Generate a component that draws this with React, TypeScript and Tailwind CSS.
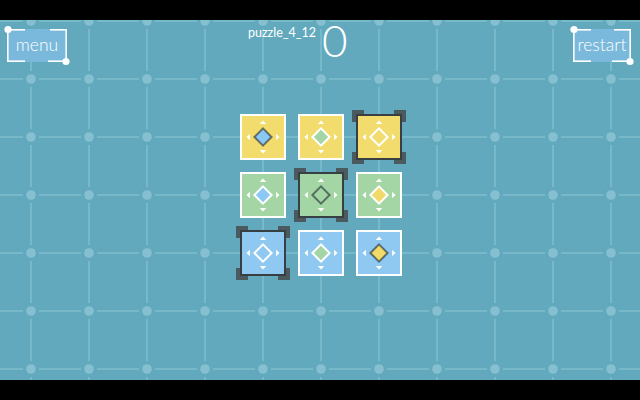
import React from "react";

type Hue = "yellow" | "green" | "blue";

const tileBg: Record<Hue, string> = {
  yellow: "bg-[#f2dc6e]",
  green: "bg-[#a4d6a5]",
  blue: "bg-[#8fc9f1]",
};

const gemFill: Record<Hue, string> = {
  yellow: "#f2da6a",
  green: "#a4d6a5",
  blue: "#8cc8f4",
};

type Tile = { bg: Hue; gem: Hue | null; dark: boolean; selected?: boolean };

const tiles: Tile[] = [
  { bg: "yellow", gem: "blue", dark: true },
  { bg: "yellow", gem: "green", dark: false },
  { bg: "yellow", gem: null, dark: false, selected: true },
  { bg: "green", gem: "blue", dark: false },
  { bg: "green", gem: null, dark: true, selected: true },
  { bg: "green", gem: "yellow", dark: false },
  { bg: "blue", gem: null, dark: false, selected: true },
  { bg: "blue", gem: "green", dark: false },
  { bg: "blue", gem: "yellow", dark: true },
];

const xs = Array.from({ length: 11 }, (_, i) => 31 + i * 58);
const ys = Array.from({ length: 7 }, (_, i) => 1 + i * 58);

function GridBackground() {
  return (
    <svg className="absolute inset-0" width={640} height={360}>
      {xs.map((x) => (
        <line key={"v" + x} x1={x} y1={0} x2={x} y2={360} stroke="#80bfcd" strokeWidth={1.5} />
      ))}
      {ys.map((y) => (
        <line key={"h" + y} x1={0} y1={y} x2={640} y2={y} stroke="#80bfcd" strokeWidth={1.5} />
      ))}
      {ys.map((y) =>
        xs.map((x) => (
          <g key={x + "-" + y}>
            <circle cx={x} cy={y} r={8} fill="#62a9be" />
            <circle cx={x} cy={y} r={4.8} fill="#86bfcf" />
          </g>
        ))
      )}
    </svg>
  );
}

function FrameButton({ label, w }: { label: string; w: number }) {
  return (
    <div className="relative h-[33px] bg-[#7bb9dc] flex items-center justify-center" style={{ width: w }}>
      <svg className="absolute inset-0 overflow-visible" width={w} height={33}>
        <g stroke="#ffffff" strokeWidth={1.6} fill="none">
          <line x1={0.8} y1={0} x2={0.8} y2={33} />
          <line x1={w - 0.8} y1={0} x2={w - 0.8} y2={33} />
          <line x1={0} y1={0.8} x2={18} y2={0.8} />
          <line x1={w - 17} y1={0.8} x2={w} y2={0.8} />
          <line x1={0} y1={32.2} x2={18} y2={32.2} />
          <line x1={w - 19} y1={32.2} x2={w} y2={32.2} />
        </g>
        <circle cx={1} cy={0.5} r={3.6} fill="#ffffff" />
        <circle cx={w - 1} cy={32.5} r={3.6} fill="#ffffff" />
      </svg>
      <span className="relative text-white text-[17.5px] leading-none font-light font-['Lato',sans-serif] pb-[2px]">
        {label}
      </span>
    </div>
  );
}

function Gem({ tile }: { tile: Tile }) {
  const stroke = tile.dark ? "rgba(28,38,44,0.58)" : "#ffffff";
  return (
    <svg width={42} height={42} viewBox="0 0 42 42">
      <g fill="#ffffff">
        <polygon points="21,4.5 24.2,7.9 17.8,7.9" />
        <polygon points="21,37.5 24.2,34.1 17.8,34.1" />
        <polygon points="4.5,21 7.9,17.8 7.9,24.2" />
        <polygon points="37.5,21 34.1,17.8 34.1,24.2" />
      </g>
      <polygon
        points="21,12.4 29.6,21 21,29.6 12.4,21"
        fill={tile.gem ? gemFill[tile.gem] : "none"}
        stroke={stroke}
        strokeWidth={2}
      />
    </svg>
  );
}

function TileBox({ tile }: { tile: Tile }) {
  const border = tile.selected ? "border-[#383f42]" : "border-white";
  return (
    <div className={`relative w-[46px] h-[46px] border-2 ${border} ${tileBg[tile.bg]} flex items-center justify-center`}>
      {tile.selected && (
        <>
          <span className="absolute -top-[6px] -left-[6px] w-[12px] h-[12px] border-t-4 border-l-4 border-[#4a5a5f]" />
          <span className="absolute -top-[6px] -right-[6px] w-[12px] h-[12px] border-t-4 border-r-4 border-[#4a5a5f]" />
          <span className="absolute -bottom-[6px] -left-[6px] w-[12px] h-[12px] border-b-4 border-l-4 border-[#4a5a5f]" />
          <span className="absolute -bottom-[6px] -right-[6px] w-[12px] h-[12px] border-b-4 border-r-4 border-[#4a5a5f]" />
        </>
      )}
      <Gem tile={tile} />
    </div>
  );
}

export default function App() {
  return (
    <div className="w-[640px] h-[400px] bg-black flex flex-col font-['Lato',sans-serif]">
      <div className="h-[20px] bg-black" />
      <div className="relative h-[360px] bg-[#62a9be]">
        <GridBackground />
        <div className="relative flex flex-col">
          {/* header */}
          <div className="flex items-start pt-[9px] pl-[7px] pr-[9px]">
            <FrameButton label="menu" w={60} />
            <div className="flex items-start ml-[181px]">
              <span className="mt-[-2px] text-white text-[12.5px] leading-none">puzzle_4_12</span>
              <span className="ml-[6px] mt-[-5px] text-white text-[44px] leading-[32px] font-light">0</span>
            </div>
            <div className="ml-auto">
              <FrameButton label="restart" w={58} />
            </div>
          </div>

          {/* board */}
          <div className="flex justify-center pl-[2px] mt-[52px]">
            <div className="grid grid-cols-3 gap-[12px]">
              {tiles.map((t, i) => (
                <TileBox key={i} tile={t} />
              ))}
            </div>
          </div>
        </div>
      </div>
      <div className="h-[20px] bg-black" />
    </div>
  );
}
